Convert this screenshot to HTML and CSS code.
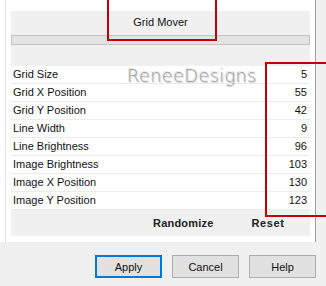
FILE: index.html
```html
<!DOCTYPE html>
<html lang="en">
<head>
  <meta charset="UTF-8">
  <title>Grid Mover</title>
  <link rel="stylesheet" href="styles.css">
</head>
<body>
  <div class="sheet">
    <div class="gutter"></div>
    <div class="content">
      <div class="panel">
        <div class="title">Grid Mover</div>
        <div class="track"></div>
        <div class="spacer"></div>
        <div class="rows">
          <div class="row"><span>Grid Size</span><span>5</span></div>
          <div class="row"><span>Grid X Position</span><span>55</span></div>
          <div class="row"><span>Grid Y Position</span><span>42</span></div>
          <div class="row"><span>Line Width</span><span>9</span></div>
          <div class="row"><span>Line Brightness</span><span>96</span></div>
          <div class="row"><span>Image Brightness</span><span>103</span></div>
          <div class="row"><span>Image X Position</span><span>130</span></div>
          <div class="row"><span>Image Y Position</span><span>123</span></div>
        </div>
        <div class="actions">
          <span class="action randomize">Randomize</span>
          <span class="action reset">Reset</span>
        </div>
      </div>
    </div>
    <div class="edge"></div>
  </div>

  <div class="buttons">
    <button class="btn default">Apply</button>
    <button class="btn">Cancel</button>
    <button class="btn">Help</button>
  </div>

  <div class="watermark">ReneeDesigns</div>
  <div class="mark mark-title"></div>
  <div class="mark mark-values"></div>
</body>
</html>
```

FILE: styles.css
```css
body {
  margin: 0;
  background-color: #f0f0f0;
  font-family: 'Liberation Sans', Arial, sans-serif;
  font-size: 11px;
  color: #111;
  width: 326px;
  height: 286px;
  overflow: hidden;
  position: relative;
}
.sheet {
  display: flex;
  height: 242px;
  background-color: #fff;
}
.gutter {
  width: 5px;
  border-right: 1px solid #e3e3e3;
}
.content {
  flex: 1;
  padding: 11px 5px 0 5px;
}
.edge {
  width: 10px;
  border-left: 1px solid #a0a0a0;
  background-color: #f0f0f0;
}
.panel {
  background-color: #f0f0f0;
  height: 225px;
}
.title {
  height: 24px;
  line-height: 23px;
  text-align: center;
}
.track {
  height: 8px;
  background-color: #e3e3e3;
  border: 1px solid #c4c4c4;
}
.spacer {
  height: 21px;
}
.row {
  display: flex;
  justify-content: space-between;
  height: 17px;
  line-height: 17px;
  padding: 0 3px 0 2px;
  background-color: #fff;
  border-bottom: 1px solid #ececec;
}
.actions {
  display: flex;
  height: 26px;
  line-height: 26px;
  font-weight: bold;
  color: #222;
}
.randomize {
  margin-left: 142px;
  letter-spacing: 0.2px;
}
.reset {
  margin-left: 38px;
  letter-spacing: 0.6px;
}
.buttons {
  display: flex;
  gap: 10px;
  justify-content: flex-end;
  padding: 13px 10px 0 0;
}
.btn {
  width: 67px;
  height: 23px;
  font-family: 'Liberation Sans', Arial, sans-serif;
  font-size: 11px;
  background-color: #e1e1e1;
  border: 1px solid #adadad;
  padding: 0;
  color: #111;
}
.btn.default {
  border: 2px solid #0078d7;
}
.watermark {
  position: absolute;
  left: 127px;
  top: 65px;
  font-family: 'DejaVu Sans', sans-serif;
  font-size: 18px;
  font-weight: 200;
  letter-spacing: 0.2px;
  color: #9c9c9c;
  text-shadow: -1px -1px 0 #e8e8e8, 1px 1px 1px #c8c8c8;
}
.mark {
  position: absolute;
  border: 2px solid #c00000;
}
.mark-title {
  left: 107px;
  top: -4px;
  width: 106px;
  height: 41px;
}
.mark-values {
  left: 265px;
  top: 62px;
  width: 70px;
  height: 151px;
}
```
